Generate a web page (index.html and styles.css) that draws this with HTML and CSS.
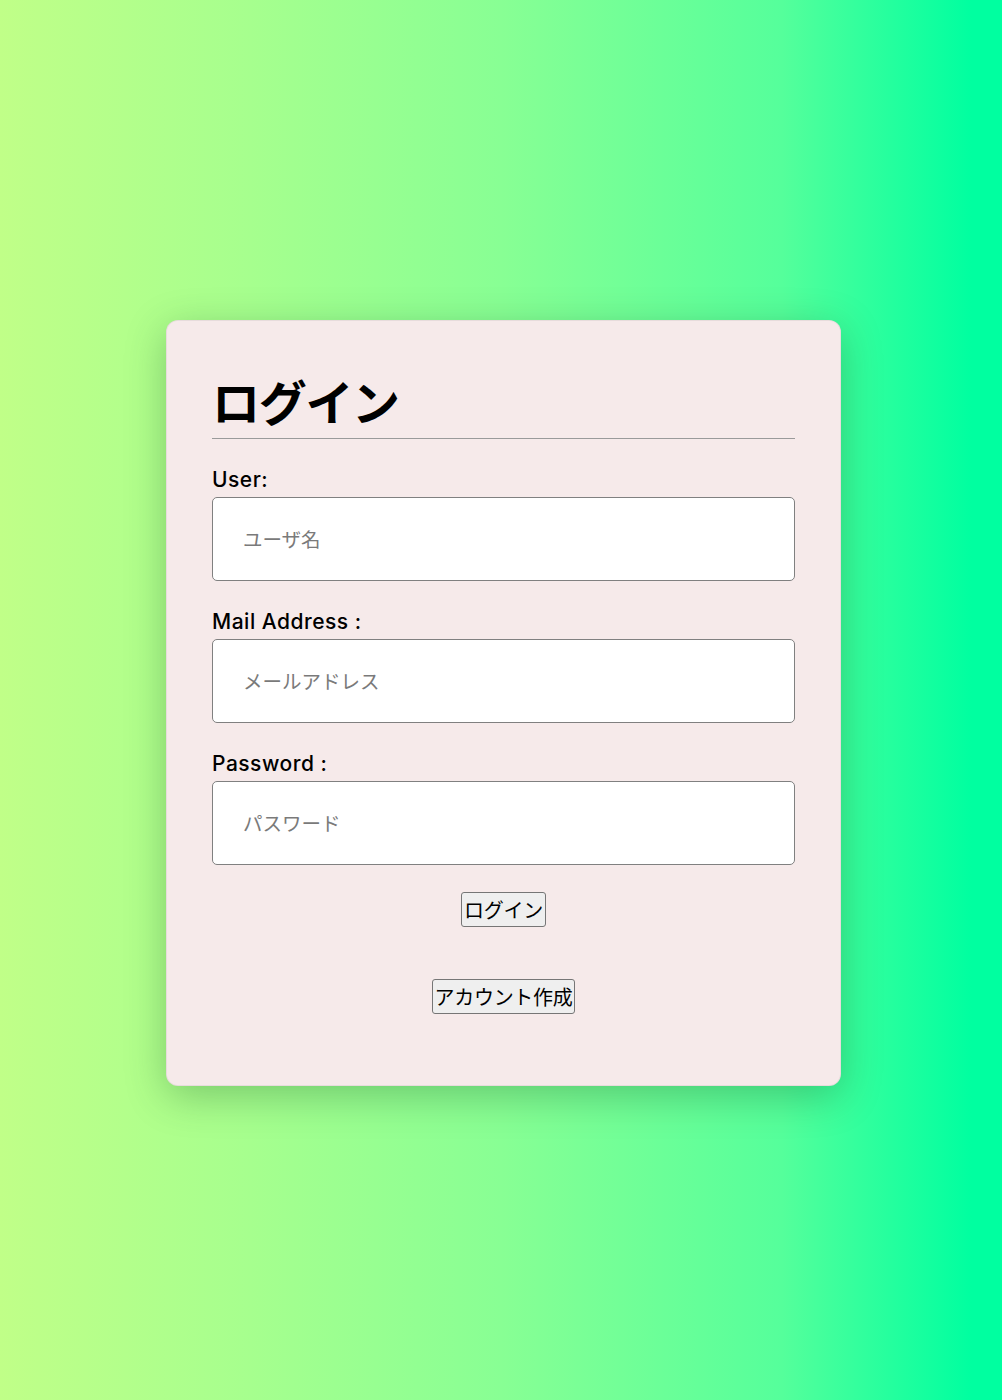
FILE: index.html
```html
<!DOCTYPE html>
<html lang="ja">
<head>
<meta charset="utf-8">
<title>ログイン</title>
<link rel="stylesheet" href="styles.css">
</head>
<body>
<main class="page">
  <form class="card">
    <h1 class="title">ログイン</h1>
    <hr class="rule">
    <label class="label" for="user">User:</label>
    <input class="field" id="user" type="text" placeholder="ユーザ名">
    <label class="label" for="mail">Mail Address :</label>
    <input class="field" id="mail" type="email" placeholder="メールアドレス">
    <label class="label" for="pass">Password :</label>
    <input class="field" id="pass" type="password" placeholder="パスワード">
    <div class="actions">
      <button class="btn" type="button">ログイン</button>
      <button class="btn" type="button">アカウント作成</button>
    </div>
  </form>
</main>
</body>
</html>
```

FILE: styles.css
```css
html, body {
  margin: 0;
  padding: 0;
}
body {
  background: linear-gradient(to right, #c0ff88 0%, #a6ff8e 25%, #88ff94 50%, #55ff9b 78%, #00ffa0 97%, #00ffa0 100%);
  font-family: Inter, "Noto Sans CJK JP", sans-serif;
  min-height: 1400px;
}
.page {
  min-height: 1400px;
  box-sizing: border-box;
  padding-top: 5px;
  display: flex;
  align-items: center;
  justify-content: center;
}
.card {
  width: 583px;
  padding: 49px 45px 71px;
  background: #f6eaea;
  border-radius: 12px;
  border: 1px solid rgba(0,0,0,0.06);
  box-shadow: 0 10px 40px rgba(0, 60, 20, 0.28);
  display: flex;
  flex-direction: column;
  margin-left: 5px;
}
.title {
  margin: 0 0 8px;
  font-family: "Noto Sans CJK JP", sans-serif;
  font-size: 48px;
  line-height: 60px;
  font-weight: 700;
  color: #000;
  letter-spacing: -1.3px;
}
.rule {
  margin: 0;
  border: 0;
  height: 1px;
  background: #9a9a9a;
}
.label {
  margin-top: 29px;
  height: 24px;
  line-height: 24px;
  font-family: Inter, "Noto Sans CJK JP", sans-serif;
  font-size: 21px;
  letter-spacing: 0.5px;
  font-weight: 500;
  color: #000;
}
.field {
  margin-top: 5px;
  height: 84px;
  box-sizing: border-box;
  border: 1px solid #808080;
  border-radius: 5px;
  background: #fff;
  padding: 0 30px;
  font-family: "Noto Sans CJK JP", sans-serif;
  font-size: 19.5px;
  outline: none;
}
.field::placeholder {
  color: #7a7a7a;
}
.actions {
  margin-top: 27px;
  display: flex;
  flex-direction: column;
  align-items: center;
  gap: 52px;
}
.btn {
  font-family: "Noto Sans CJK JP", sans-serif;
  font-size: 20px;
  line-height: 29px;
  padding: 2px 2px;
  border: 1px solid #767676;
  border-radius: 3px;
  background: #efefef;
  color: #000;
  letter-spacing: -0.3px;
}
```
